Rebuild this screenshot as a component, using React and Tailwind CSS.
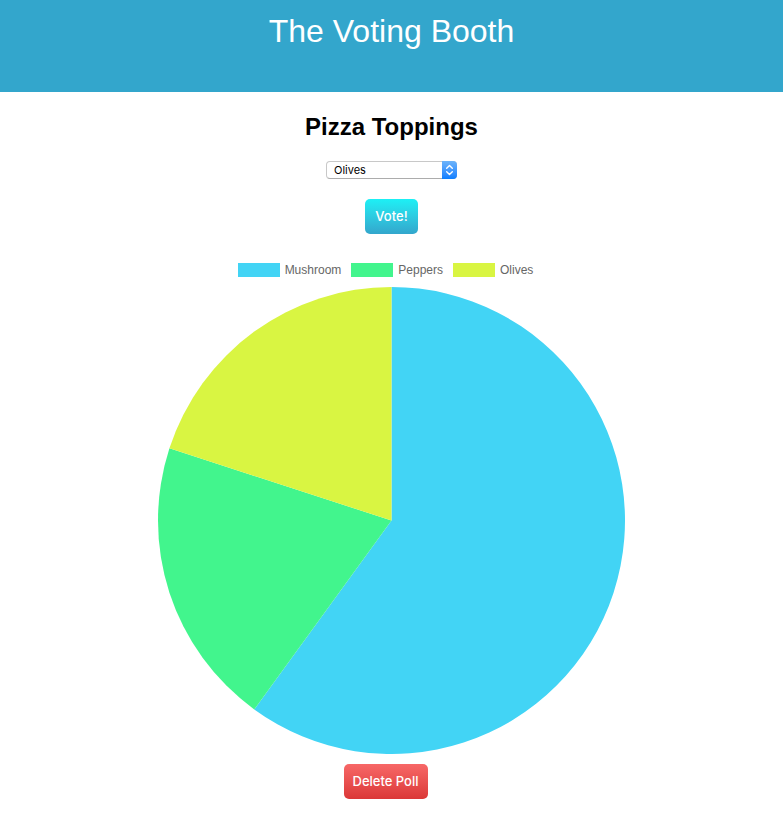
import { useState } from "react";

const OPTIONS = [
  { name: "Mushroom", votes: 3, fill: "fill-[#42d4f5]", swatch: "bg-[#42d4f5]" },
  { name: "Peppers", votes: 1, fill: "fill-[#42f58d]", swatch: "bg-[#42f58d]" },
  { name: "Olives", votes: 1, fill: "fill-[#d9f542]", swatch: "bg-[#d9f542]" },
];

const SIZE = 467;
const R = SIZE / 2;

function PieChart({ options }) {
  const total = options.reduce((sum, o) => sum + o.votes, 0);
  let turned = 0;
  const point = (share) => {
    const angle = share * 2 * Math.PI - Math.PI / 2;
    return `${R + R * Math.cos(angle)} ${R + R * Math.sin(angle)}`;
  };
  return (
    <svg
      viewBox={`0 0 ${SIZE} ${SIZE}`}
      className="mt-[9px] block w-full max-w-[467px]"
      role="img"
      aria-label="Votes per topping"
    >
      {options.map((o) => {
        const start = turned / total;
        turned += o.votes;
        const end = turned / total;
        const large = end - start > 0.5 ? 1 : 0;
        return (
          <path
            key={o.name}
            className={o.fill}
            d={`M${R} ${R}L${point(start)}A${R} ${R} 0 ${large} 1 ${point(end)}Z`}
          />
        );
      })}
    </svg>
  );
}

export default function App() {
  const [choice, setChoice] = useState("Olives");
  return (
    <div className="bg-white font-['Liberation_Sans',Arial,sans-serif] text-black">
      <header className="h-[92px] bg-[#33a6cc] pt-3 text-center">
        <h1 className="text-[32px] leading-[38px] text-white">The Voting Booth</h1>
      </header>
      <main className="flex flex-col items-center px-4 pb-4">
        <h2 className="mt-5 text-2xl leading-[30px] font-bold">Pizza Toppings</h2>
        <div className="relative mt-[19px] w-[131px]">
          <select
            aria-label="Topping"
            value={choice}
            onChange={(e) => setChoice(e.target.value)}
            className="block h-[18px] w-full appearance-none rounded-[4px] border border-[#c8c8c8] border-b-[#acacac] bg-white pr-4 pl-[7px] font-['Inter',sans-serif] text-[11px] leading-4"
          >
            {OPTIONS.map((o) => (
              <option key={o.name}>{o.name}</option>
            ))}
          </select>
          <span className="pointer-events-none absolute inset-y-0 right-0 flex w-[15px] items-center justify-center rounded-r-[4px] bg-linear-to-b from-[#6cb3fa] to-[#087eff]">
            <svg
              viewBox="0 0 9 12"
              className="h-3 w-[9px] fill-none stroke-white stroke-[1.4]"
              strokeLinecap="round"
              strokeLinejoin="round"
            >
              <path d="M1.7 4.3 4.5 1.6 7.3 4.3M1.7 7.7 4.5 10.4 7.3 7.7" />
            </svg>
          </span>
        </div>
        <button
          type="button"
          className="mt-5 h-[35px] rounded-[5px] bg-linear-to-b from-[#1cf0f5] to-[#33a6cc] px-[10px] font-['Inter',sans-serif] text-[13px] font-medium text-white"
        >
          Vote!
        </button>
        <ul className="mt-7 mr-3 flex gap-[10px] text-xs leading-4 text-[#666]">
          {OPTIONS.map((o) => (
            <li key={o.name} className="flex items-center gap-[5px]">
              <span className={`h-[14px] w-[42px] ${o.swatch}`} />
              {o.name}
            </li>
          ))}
        </ul>
        <PieChart options={OPTIONS} />
        <button
          type="button"
          className="mt-[10px] mr-3 h-[35px] rounded-[5px] bg-linear-to-b from-[#f76767] to-[#db3737] px-[9px] font-['Inter',sans-serif] text-[13px] font-medium text-white"
        >
          Delete Poll
        </button>
      </main>
    </div>
  );
}
